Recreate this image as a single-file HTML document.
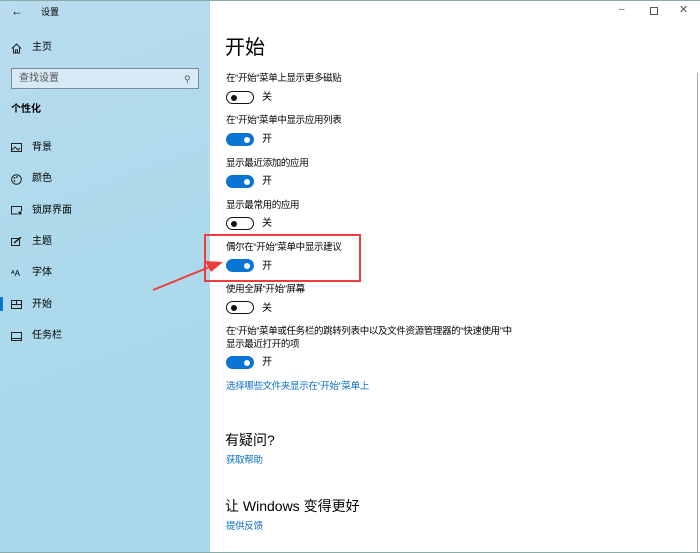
<!DOCTYPE html>
<html><head><meta charset="utf-8"><style>
*{margin:0;padding:0;box-sizing:border-box}
body{width:700px;height:553px;position:relative;overflow:hidden;font-family:"Liberation Sans","Noto Sans CJK SC",sans-serif;background:#fff;color:#000}
.side{position:absolute;left:0;top:0;width:210px;height:553px;background:linear-gradient(160deg,#b9dcee 0%,#acd9ec 50%,#a9d8ec 100%)}
.t{position:absolute;font-size:10px;white-space:nowrap;line-height:12px}
.r{font-size:9.5px;letter-spacing:-0.35px}
.tog{position:absolute;width:28px;height:13px;border-radius:7px}
.on{background:#0a74d4}
.on::after{content:"";position:absolute;right:4px;top:3.5px;width:6px;height:6px;border-radius:50%;background:#fff}
.off{border:1.5px solid #111;background:#fff}
.off::after{content:"";position:absolute;left:4px;top:2.5px;width:6px;height:6px;border-radius:50%;background:#111}
.link{color:#0a6cc8}
.ic{position:absolute;left:11px;width:11px;height:9px}
</style></head><body>
<div class="side">
<div class="t" style="left:11px;top:5px;font-size:12px">←</div>
<div class="t" style="left:41px;top:6px;font-size:9px">设置</div>
<svg class="ic" style="top:43px;height:11px" viewBox="0 0 11 11"><path d="M1 5.5L5.5 1 10 5.5M2.5 4v6h6V4M4.5 10V7h2v3" fill="none" stroke="#222" stroke-width="1"/></svg>
<div class="t" style="left:32px;top:42px">主页</div>
<div style="position:absolute;left:11px;top:68px;width:188px;height:21px;border:1px solid #7a8a96;background:#d6ebf5"></div>
<div class="t" style="left:19px;top:73px;color:#555">查找设置</div>
<div class="t" style="left:184px;top:73px;color:#555;font-size:9px">⚲</div>
<div class="t" style="left:11px;top:104px;font-weight:bold">个性化</div>
<svg class="ic" style="top:143px" viewBox="0 0 11 9"><rect x=".5" y=".5" width="10" height="8" fill="none" stroke="#222"/><path d="M1 7l3-3 3 3 2-2" fill="none" stroke="#222"/></svg>
<div class="t" style="left:32px;top:142px">背景</div>
<svg class="ic" style="top:174px;height:11px" viewBox="0 0 11 11"><circle cx="5.5" cy="5.5" r="4.8" fill="none" stroke="#222"/><circle cx="3.5" cy="4" r=".9" fill="#222"/><circle cx="6" cy="3" r=".9" fill="#222"/><circle cx="3.5" cy="7" r=".9" fill="#222"/></svg>
<div class="t" style="left:32px;top:173px">颜色</div>
<svg class="ic" style="top:206px" viewBox="0 0 11 9"><path d="M7 8H.5V.5h10V5" fill="none" stroke="#222"/><rect x="7.5" y="5.5" width="3" height="3" fill="#222"/></svg>
<div class="t" style="left:32px;top:205px">锁屏界面</div>
<svg class="ic" style="top:237px" viewBox="0 0 11 9"><rect x=".5" y="1.5" width="8" height="7" fill="none" stroke="#222"/><path d="M3 6l7-6" stroke="#222" stroke-width="1.5"/></svg>
<div class="t" style="left:32px;top:236px">主题</div>
<div class="t" style="left:11px;top:268px;font-size:8px">ᴬA</div>
<div class="t" style="left:32px;top:267px">字体</div>
<div style="position:absolute;left:0;top:297px;width:3px;height:14px;background:#0a74d4"></div>
<svg class="ic" style="top:300px" viewBox="0 0 11 9"><rect x=".5" y=".5" width="10" height="8" fill="none" stroke="#222"/><path d="M.5 4.5h10M5.5.5v4" stroke="#222"/></svg>
<div class="t" style="left:32px;top:299px">开始</div>
<svg class="ic" style="top:332px" viewBox="0 0 11 9"><rect x=".5" y=".5" width="10" height="8" fill="none" stroke="#222"/><path d="M.5 6.5h10" stroke="#222"/></svg>
<div class="t" style="left:32px;top:330px">任务栏</div>
</div>
<div style="position:absolute;left:0;top:0;width:700px;height:1px;background:#8aa"></div>
<div style="position:absolute;left:0;top:552px;width:700px;height:1px;background:#8aa"></div>
<div style="position:absolute;left:697px;top:73px;width:1px;height:480px;background:#aaa"></div>
<div class="t" style="left:619px;top:4px;color:#555">–</div>
<div style="position:absolute;left:650px;top:7px;width:8px;height:8px;border:1px solid #555"></div>
<div class="t" style="left:679px;top:4px;color:#555;font-size:11px">✕</div>
<div class="t" style="left:225px;top:36px;font-size:20px;line-height:24px">开始</div>
<div class="t r" style="left:226px;top:73px">在“开始”菜单上显示更多磁贴</div>
<div class="tog off" style="left:226px;top:91px"></div><div class="t" style="left:262px;top:92px">关</div>
<div class="t r" style="left:226px;top:115px">在“开始”菜单中显示应用列表</div>
<div class="tog on" style="left:226px;top:133px"></div><div class="t" style="left:262px;top:134px">开</div>
<div class="t r" style="left:226px;top:158px">显示最近添加的应用</div>
<div class="tog on" style="left:226px;top:175px"></div><div class="t" style="left:262px;top:176px">开</div>
<div class="t r" style="left:226px;top:200px">显示最常用的应用</div>
<div class="tog off" style="left:226px;top:217px"></div><div class="t" style="left:262px;top:218px">关</div>
<div class="t r" style="left:226px;top:242px">偶尔在“开始”菜单中显示建议</div>
<div class="tog on" style="left:226px;top:259px"></div><div class="t" style="left:262px;top:261px">开</div>
<div class="t r" style="left:226px;top:284px">使用全屏“开始”屏幕</div>
<div class="tog off" style="left:226px;top:301px"></div><div class="t" style="left:262px;top:303px">关</div>
<div class="t r" style="left:226px;top:326px">在“开始”菜单或任务栏的跳转列表中以及文件资源管理器的“快速使用”中</div>
<div class="t r" style="left:226px;top:339px">显示最近打开的项</div>
<div class="tog on" style="left:226px;top:356px"></div><div class="t" style="left:262px;top:357px">开</div>
<div class="t r link" style="left:226px;top:381px">选择哪些文件夹显示在“开始”菜单上</div>
<div class="t" style="left:225px;top:431px;font-size:14px;line-height:18px">有疑问?</div>
<div class="t r link" style="left:226px;top:455px">获取帮助</div>
<div class="t" style="left:225px;top:497px;font-size:14px;line-height:18px">让 Windows 变得更好</div>
<div class="t r link" style="left:226px;top:521px">提供反馈</div>
<div style="position:absolute;left:204px;top:234px;width:157px;height:48px;border:2px solid #ee3b3b"></div>
<svg style="position:absolute;left:0;top:0" width="700" height="553"><path d="M153 290L212 266" stroke="#ee3b3b" stroke-width="2"/><path d="M223 262L205 261L211 272Z" fill="#ee3b3b"/></svg>
</body></html>
